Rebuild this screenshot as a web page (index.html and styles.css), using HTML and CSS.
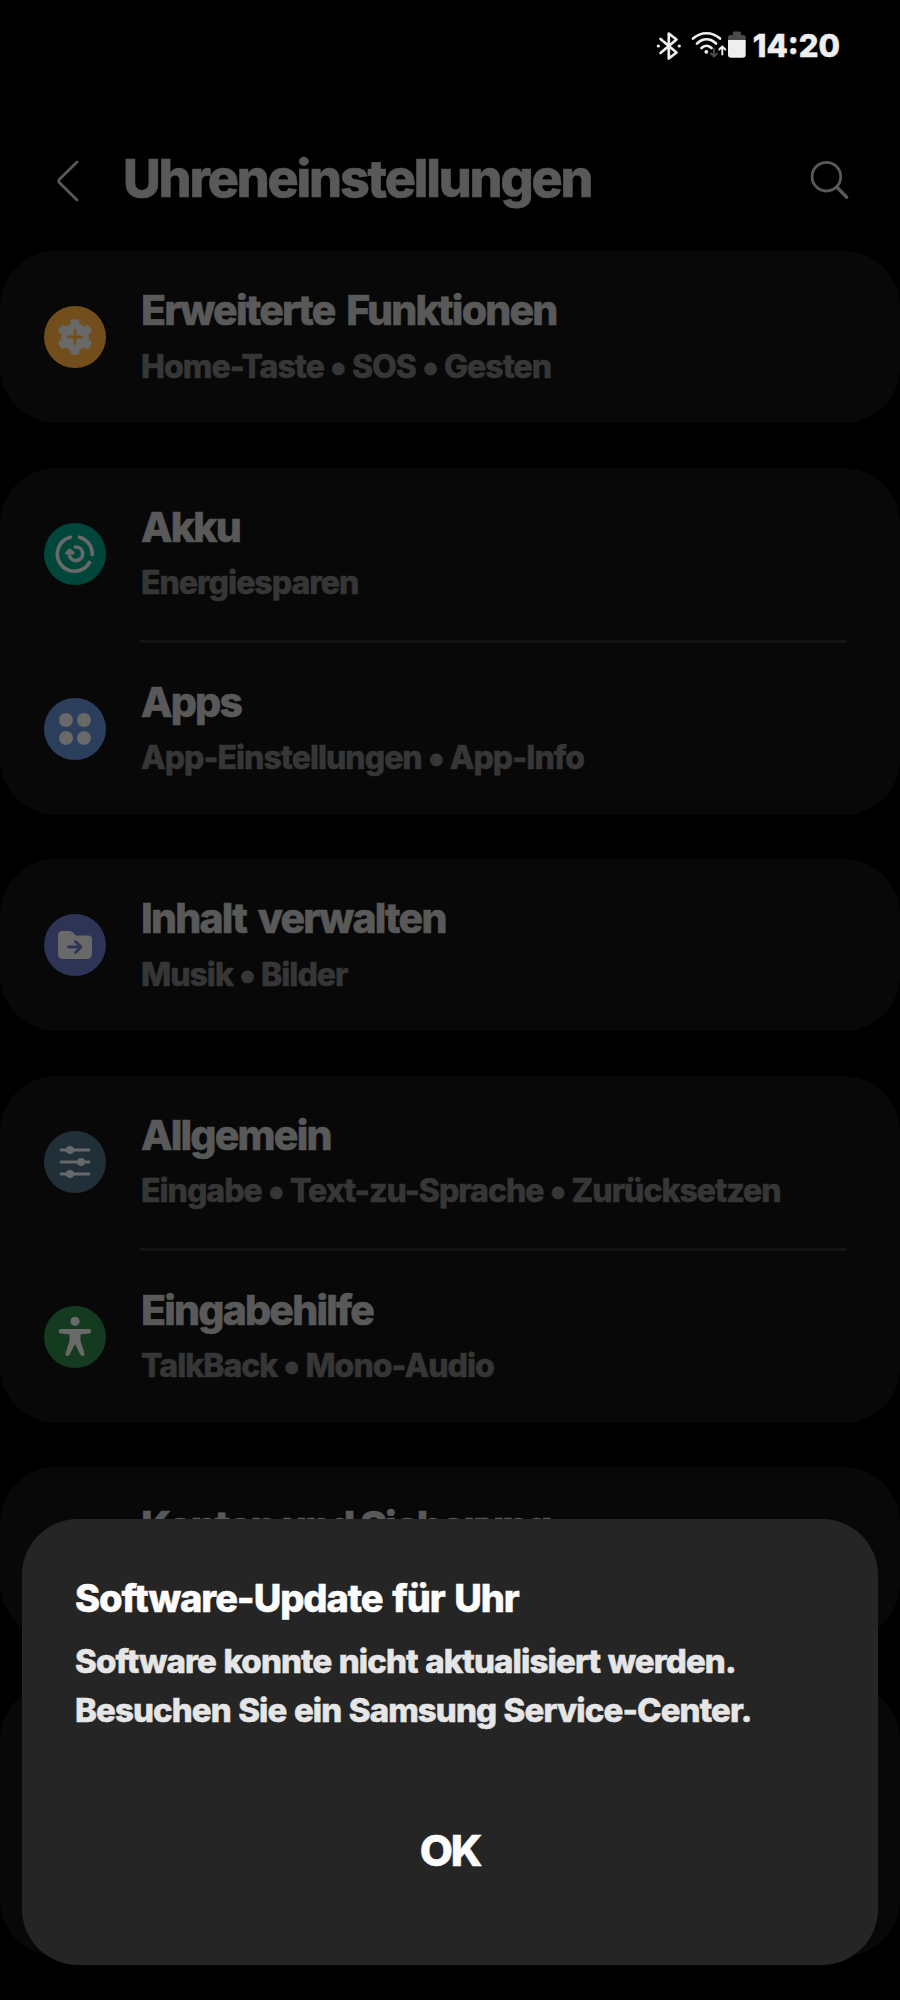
FILE: index.html
```html
<!DOCTYPE html>
<html lang="de">
<head>
<meta charset="utf-8">
<title>Uhreneinstellungen</title>
<link rel="stylesheet" href="styles.css">
</head>
<body>
<div class="screen">
  <div class="status">
    <svg class="status-icons" width="94" height="32" viewBox="0 0 94 32" fill="none" stroke="#eee" stroke-width="2.700" stroke-linecap="round" stroke-linejoin="round">
      <path d="M4.500 8 20.500 21.500 12.800 27.500V2.500L20.500 8.500 4.500 22"/>
      <path d="M2.300 15h.1M23.200 15h.1" stroke-width="3.200"/>
      <path d="M37 7.500C45 .5 56 .5 64 7.500M41 12.500c6-5.500 13-5.500 19 0M45.500 17c3-3 7-3 10 0"/>
      <circle cx="50.300" cy="20.800" r="1.900" fill="#eee" stroke="none"/>
      <path d="M58 17.500v8m-3-3 3 3 3-3" stroke="#4b4b4b" stroke-width="1.900"/>
      <path d="M66.300 23.500v-8m-3 3 3-3 3 3" stroke-width="1.900"/>
      <path d="M72 9V6.500q0-2.500 2.500-2.500h2.500V1.500q0-1 1-1h6q1 0 1 1V4h2.200q2.500 0 2.500 2.500V9z" fill="#4b4b4b" stroke="none"/>
      <path d="M72 9h17.700v14.700q0 3-3 3H75q-3 0-3-3z" fill="#eee" stroke="none"/>
    </svg>
    <span class="clock">14:20</span>
  </div>
  <header class="header">
    <svg class="back" width="22" height="42" viewBox="0 0 22 42" fill="none" stroke="#595959" stroke-width="2.800" stroke-linecap="round" stroke-linejoin="round"><path d="M20 2 2.300 19.500q-1.200 1.500 0 3L20 40"/></svg>
    <h1 class="heading">Uhreneinstellungen</h1>
    <svg class="search" width="40" height="40" viewBox="0 0 40 40" fill="none" stroke="#595959" stroke-width="2.800" stroke-linecap="round"><circle cx="16.400" cy="16.700" r="14.300"/><path d="m26.700 27 10 10.300" stroke-width="3.400"/></svg>
  </header>
  <main class="list">
    <section class="card">
      <div class="row">
        <svg class="icon" viewBox="0 0 62 62"><circle cx="31" cy="31" r="31" fill="#714e1b"/><g fill="#696969"><circle cx="31" cy="31" r="13.800"/><rect x="26.500" y="13.300" width="9" height="35.400" rx="3"/><rect x="26.500" y="13.300" width="9" height="35.400" rx="3" transform="rotate(60 31 31)"/><rect x="26.500" y="13.300" width="9" height="35.400" rx="3" transform="rotate(120 31 31)"/></g><path d="M31 24.500v13M24.500 31h13" stroke="#714e1b" stroke-width="2.800" stroke-linecap="round"/></svg>
        <div class="text"><div class="title">Erweiterte Funktionen</div><div class="sub">Home-Taste <span class="dot">•</span> SOS <span class="dot">•</span> Gesten</div></div>
      </div>
    </section>
    <section class="card">
      <div class="row">
        <svg class="icon" viewBox="0 0 62 62" fill="none" stroke="#696969" stroke-width="3.700" stroke-linecap="round" stroke-linejoin="round"><circle cx="31" cy="31" r="31" fill="#01463a" stroke="none"/><path d="M26.500 14.300A17.200 17.200 0 1 0 45.500 39.500M35.500 14.300A17.200 17.200 0 0 1 48.200 31.500"/><path d="M31.500 24a6.800 6.800 0 1 1-6 9"/><path d="m22.500 30 3-3 3.500 3z" fill="#696969" stroke-width="3"/></svg>
        <div class="text"><div class="title">Akku</div><div class="sub">Energiesparen</div></div>
      </div>
      <div class="divider"></div>
      <div class="row">
        <svg class="icon" viewBox="0 0 62 62"><circle cx="31" cy="31" r="31" fill="#2b3f5c"/><g fill="#696969"><circle cx="22" cy="22" r="7"/><circle cx="40" cy="22" r="7"/><circle cx="22" cy="40" r="7"/><circle cx="40" cy="40" r="7"/></g></svg>
        <div class="text"><div class="title">Apps</div><div class="sub">App-Einstellungen <span class="dot">•</span> App-Info</div></div>
      </div>
    </section>
    <section class="card">
      <div class="row">
        <svg class="icon" viewBox="0 0 62 62"><circle cx="31" cy="31" r="31" fill="#2e3455"/><path d="M14 40V21.500q0-4.500 4.500-4.500h7q2 0 3.500 1.500l3 3h12q4 0 4 4V40q0 5-5 5H19q-5 0-5-5z" fill="#696969"/><path d="M24.500 33H37m-5.500-5.500L37 33l-5.500 5.500" fill="none" stroke="#2e3455" stroke-width="2.800" stroke-linecap="round" stroke-linejoin="round"/></svg>
        <div class="text"><div class="title">Inhalt verwalten</div><div class="sub">Musik <span class="dot">•</span> Bilder</div></div>
      </div>
    </section>
    <section class="card">
      <div class="row">
        <svg class="icon" viewBox="0 0 62 62" stroke="#696969" stroke-width="2.800" stroke-linecap="round"><circle cx="31" cy="31" r="31" fill="#212f39" stroke="none"/><path d="M17 19h28M17 31h28M17 43h28"/><g fill="#696969" stroke="none"><circle cx="26" cy="19" r="4"/><circle cx="37" cy="31" r="4"/><circle cx="26" cy="43" r="4"/></g></svg>
        <div class="text"><div class="title">Allgemein</div><div class="sub">Eingabe <span class="dot">•</span> Text-zu-Sprache <span class="dot">•</span> Zurücksetzen</div></div>
      </div>
      <div class="divider"></div>
      <div class="row">
        <svg class="icon" viewBox="0 0 62 62" fill="#696969"><circle cx="31" cy="31" r="31" fill="#143b20"/><circle cx="31" cy="15.300" r="4.600"/><path d="M17 23h28q2.300 0 2.300 2.200T45 27.500l-8.500 1v6l4 13q.3 2.500-1.700 2.500-1.700 0-2.500-1.500L31 38l-5.300 10.500q-.8 1.500-2.500 1.500-2 0-1.700-2.500l4-13v-6l-8.500-1q-2.300-.1-2.300-2.300T17 23z"/></svg>
        <div class="text"><div class="title">Eingabehilfe</div><div class="sub">TalkBack <span class="dot">•</span> Mono-Audio</div></div>
      </div>
    </section>
    <section class="card">
      <div class="row"><div class="icon"></div><div class="text"><div class="title title-tight">Konten und Sicherung</div></div></div>
    </section>
    <section class="card card-last"></section>
  </main>
  <div class="dialog" role="dialog">
    <h2 class="dialog-title">Software-Update für Uhr</h2>
    <p class="dialog-text">Software konnte nicht aktualisiert werden.<br>Besuchen Sie ein Samsung Service-Center.</p>
    <button class="ok">OK</button>
  </div>
</div>
</body>
</html>
```
FILE: styles.css
```css
* { box-sizing: border-box; }
body { margin: 0; background: #000; }
.screen {
  position: relative;
  width: 900px;
  height: 2000px;
  overflow: hidden;
  background: #000;
  font-family: Inter, "Liberation Sans", sans-serif;
  font-weight: 800;
  -webkit-text-stroke: 0.5px currentColor;
}
.status {
  display: flex;
  align-items: flex-start;
  justify-content: flex-end;
  height: 130px;
  padding: 31px 60px 0 0;
}
.status-icons { flex: none; margin-right: 3px; }
.clock {
  color: #eee;
  font-size: 31px;
  line-height: 30px;
}
.header {
  display: flex;
  align-items: flex-start;
  height: 121px;
  padding: 18px 50px 0 57px;
}
.back { flex: none; margin-top: 12px; }
.heading {
  flex: 1;
  margin: 1px 0 0 44px;
  color: #595959;
  font-size: 52px;
  line-height: 60px;
  font-weight: 800;
  letter-spacing: -2.2px;
  -webkit-text-stroke-width: 0.6px;
}
.search { flex: none; margin-top: 12px; }
.list {
  display: flex;
  flex-direction: column;
  gap: 44.5px;
}
.card {
  flex: none;
  background: #080808;
  border-radius: 56px;
}
.row {
  display: flex;
  align-items: flex-start;
  height: 172px;
  padding: 34px 44px 0;
}
.icon { flex: none; width: 62px; height: 62px; margin-top: 21px; }
.text { margin-left: 35px; white-space: nowrap; }
.title {
  color: #595959;
  font-size: 41px;
  line-height: 50px;
  letter-spacing: -1.8px;
  word-spacing: 4.5px;
  -webkit-text-stroke-width: 0.6px;
}
.title-tight { letter-spacing: -2.1px; word-spacing: 0; }
.sub {
  margin-top: 11.5px;
  color: #363636;
  font-size: 32px;
  line-height: 40px;
  letter-spacing: -1px;
}
.dot {
  font-size: 39px;
  line-height: 0;
  vertical-align: -2px;
}
.divider { height: 3px; margin: 0 53px 0 140px; background: #141414; }
.card-last { height: 272px; }
.dialog {
  position: absolute;
  left: 22px;
  top: 1518.5px;
  display: flex;
  flex-direction: column;
  width: 856px;
  height: 446.5px;
  padding: 56.5px 53px 0;
  border-radius: 56px;
  background: #252525;
}
.dialog-title {
  margin: 0;
  color: #fcfcfc;
  font-size: 38px;
  line-height: 46px;
  font-weight: 800;
  letter-spacing: -1.1px;
  word-spacing: 2.5px;
}
.dialog-text {
  margin: 16px 0 0;
  color: #e6e6e6;
  font-size: 33px;
  line-height: 49px;
  letter-spacing: -0.9px;
  word-spacing: 1.1px;
  white-space: nowrap;
}
.ok {
  align-self: center;
  margin-top: 89px;
  padding: 0;
  border: 0;
  background: none;
  color: #fcfcfc;
  font: inherit;
  font-size: 43px;
  line-height: 52px;
  letter-spacing: -2.3px;
}
```
